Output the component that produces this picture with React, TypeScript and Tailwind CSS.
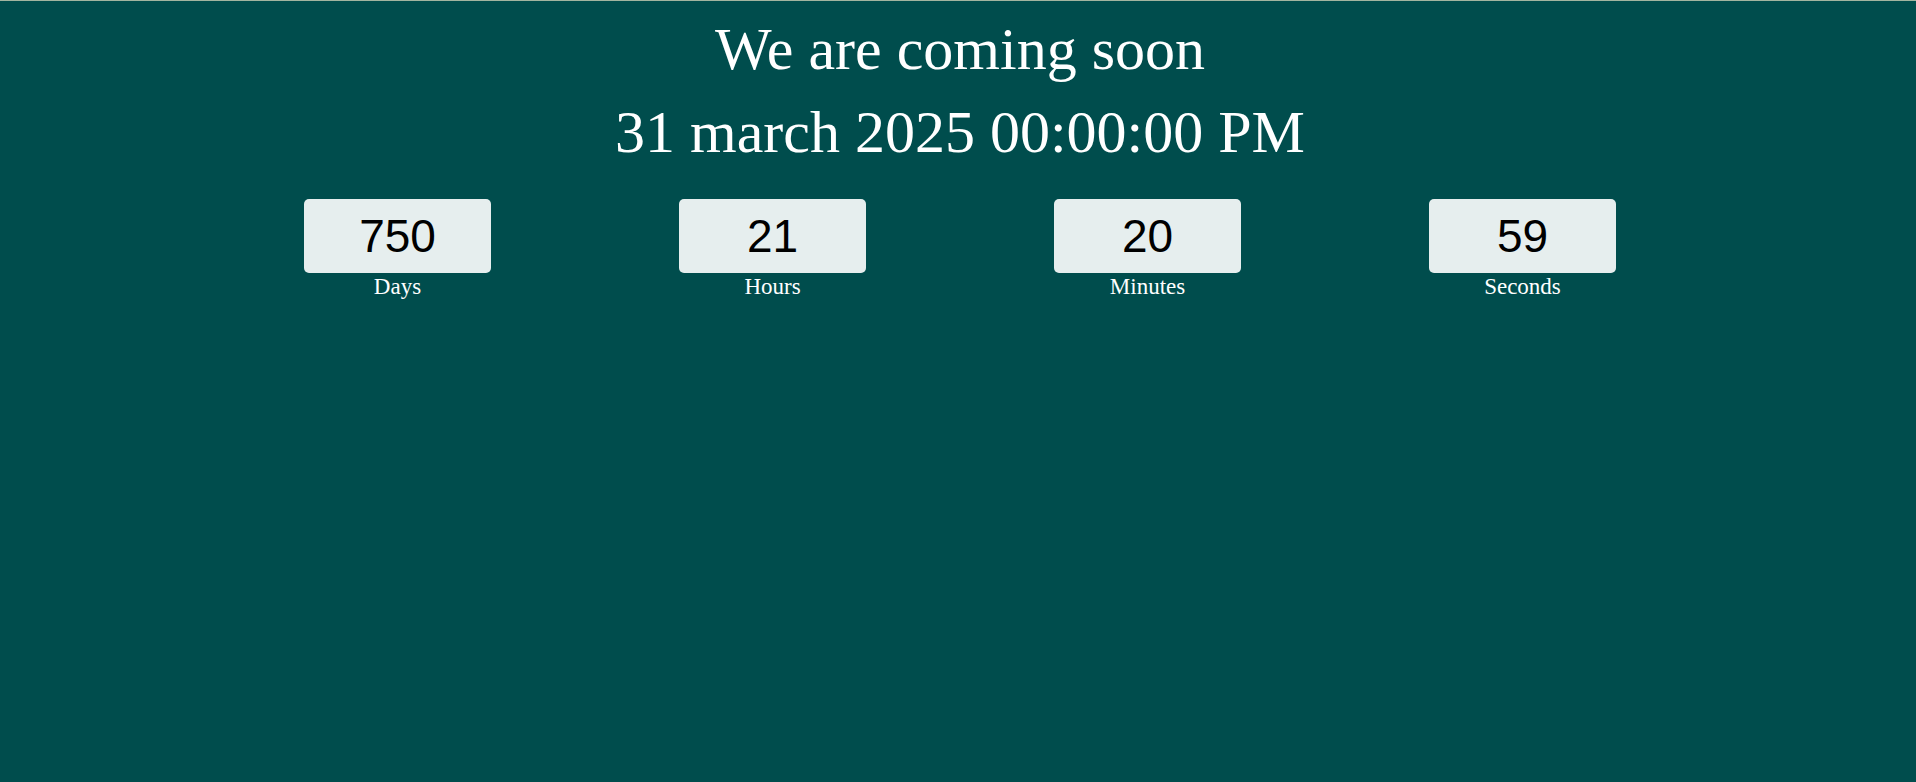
const UNITS = [
  { value: "750", label: "Days" },
  { value: "21", label: "Hours" },
  { value: "20", label: "Minutes" },
  { value: "59", label: "Seconds" },
];

export default function App() {
  return (
    <div className="min-h-screen w-full bg-[#004d4d] border-t border-[#a3b5a0] pl-[4px] font-['Liberation_Serif',serif] text-white">
      <div className="flex flex-col items-center pt-[14px]">
        <h1 className="text-[60px] leading-[69px] font-normal">We are coming soon</h1>
        <h2 className="mt-[14px] text-[60px] leading-[69px] font-normal">31 march 2025 00:00:00 PM</h2>
      </div>

      <div className="mx-auto mt-[32px] grid w-[1500px] grid-cols-4">
        {UNITS.map((u) => (
          <div key={u.label} className="flex flex-col items-center">
            <div className="flex h-[74px] w-[187px] items-center justify-center rounded-[5px] bg-[#e6eeee] font-['Liberation_Sans',Arial,sans-serif] text-[46px] leading-none text-black">
              {u.value}
            </div>
            <span className="mt-[1px] text-[23px] leading-[25px]">{u.label}</span>
          </div>
        ))}
      </div>
    </div>
  );
}
